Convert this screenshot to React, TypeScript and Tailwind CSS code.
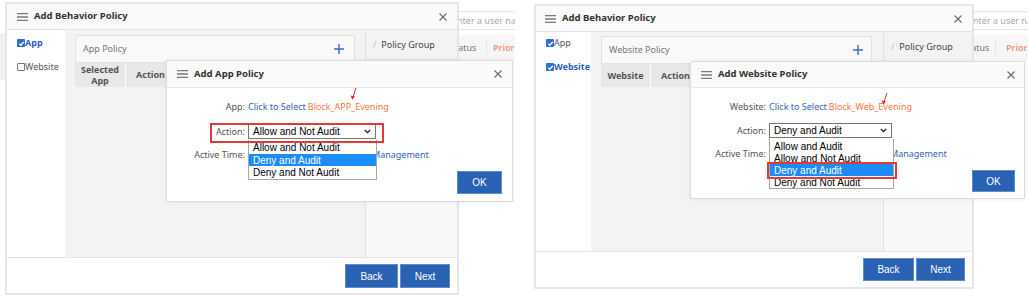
import React from "react";

const sans = "font-['Noto_Sans',sans-serif]";
const arial = "font-['Liberation_Sans',Arial,sans-serif]";

function MenuIcon() {
  return (
    <svg width="11" height="8" viewBox="0 0 11 8" className="shrink-0">
      <path d="M0 0.7h11M0 4h11M0 7.3h11" stroke="#7a7a7a" strokeWidth="1.3" />
    </svg>
  );
}

function CloseIcon() {
  return (
    <svg width="8" height="8" viewBox="0 0 8 8" className="shrink-0">
      <path d="M0.5 0.5l7 7M7.5 0.5l-7 7" stroke="#6a6a6a" strokeWidth="1.1" />
    </svg>
  );
}

function PlusIcon() {
  return (
    <svg width="10" height="10" viewBox="0 0 10 10" className="shrink-0">
      <path d="M5 0v10M0 5h10" stroke="#3a6cc0" strokeWidth="1.4" />
    </svg>
  );
}

function Chevron() {
  return (
    <svg width="7" height="5" viewBox="0 0 7 5" className="shrink-0">
      <path d="M0.8 1l2.7 2.7L6.2 1" stroke="#222" strokeWidth="1.3" fill="none" />
    </svg>
  );
}

function Check({ checked }: { checked: boolean }) {
  if (!checked) {
    return <span className="inline-block w-[8px] h-[8px] rounded-[1px] border border-[#777] bg-white shrink-0" />;
  }
  return (
    <span className="inline-flex w-[8px] h-[8px] rounded-[1px] bg-[#2f6fd6] items-center justify-center shrink-0">
      <svg width="7" height="7" viewBox="0 0 8 8">
        <path d="M1.5 4.2L3.3 6L6.6 2.2" stroke="white" strokeWidth="1.5" fill="none" />
      </svg>
    </span>
  );
}

function RedArrow({ className }: { className: string }) {
  return (
    <svg width="10" height="14" viewBox="0 0 10 14" className={className}>
      <path d="M7 1L3.6 11" stroke="#e8262b" strokeWidth="1" />
      <path d="M1.6 8.6L3.2 12.8L6 9.6Z" fill="#e8262b" />
    </svg>
  );
}

function BlueButton({ label, className }: { label: string; className: string }) {
  return (
    <button
      className={`${className} ${arial} bg-[#2a62b3] border border-[#5f8cd0] text-white text-[10px] flex items-center justify-center`}
    >
      {label}
    </button>
  );
}

function LeftShot() {
  return (
    <div className={`relative w-[515px] h-[299px] shrink-0 overflow-hidden bg-white ${sans}`}>
      {/* page behind the dialog */}
      <div className="absolute left-0 top-[33px] w-[6px] h-[47px] bg-[#f1f1f1]" />
      <div className="absolute left-[445px] top-[11px] w-[120px] h-[19px] border border-[#e2e2e2] pl-[6px] flex items-center text-[9px] text-[#a8a8a8]">
        Enter a user name
      </div>
      <div className="absolute left-[420px] top-[35px] w-[140px] h-[25px] bg-[#f6f6f6] flex items-center text-[9px]">
        <span className="w-[67px] pl-[30px] text-[#777] border-r border-[#e4e4e4]">Status</span>
        <span className="pl-[6px] text-[#f3907e] font-semibold">Priority</span>
      </div>

      {/* Add Behavior Policy */}
      <div className="relative ml-[5px] mt-[2px] w-[454px] h-[293px] border-2 border-[#e6e6e6] bg-white flex flex-col">
        <div className="h-[26px] shrink-0 border-b border-[#e4e4e4] bg-[#fafafa] flex items-center pl-[10px] pr-[10px] gap-[6px]">
          <MenuIcon />
          <span className="flex-1 font-bold text-[9.5px] text-[#333]">Add Behavior Policy</span>
          <CloseIcon />
        </div>
        <div className="h-[227px] shrink-0 flex">
          <div className="w-[58px] shrink-0 bg-white pl-[10px] pt-[6px] flex flex-col gap-[10px] text-[9px]">
            <div className="h-[14px] flex items-center">
              <Check checked />
              <span className="font-bold text-[#2b5fc0]">App</span>
            </div>
            <div className="h-[14px] flex items-center">
              <Check checked={false} />
              <span className="text-[#555]">Website</span>
            </div>
          </div>
          <div className="w-[300px] shrink-0 bg-[#f3f3f3] pl-[10px] pt-[5px]">
            <div className="w-[280px]">
              <div className="h-[28px] border border-[#e2e2e2] bg-[#f9f9f9] flex items-center justify-between pl-[7px] pr-[10px]">
                <span className="text-[9px] text-[#777]">App Policy</span>
                <PlusIcon />
              </div>
              <div className="h-[24px] bg-[#e8e8e8] flex text-[9px] font-bold text-[#555]">
                <div className="w-[50px] flex flex-col items-center justify-center leading-[11px]">
                  <span>Selected</span>
                  <span>App</span>
                </div>
                <div className="w-[50px] border-l border-white flex items-center justify-center">Action</div>
              </div>
            </div>
          </div>
          <div className="flex-1 border-l border-[#e0e0e0] bg-[#f8f8f8]">
            <div className="h-[30px] bg-[#f3f3f3] border-b border-[#e8e8e8] flex items-center pl-[7px] text-[9px]">
              <span className="text-[#bbb] mr-[5px]">/</span>
              <span className="text-[#444]">Policy Group</span>
            </div>
          </div>
        </div>
        <div className="h-[36px] shrink-0 border-t border-[#e4e4e4] flex justify-end items-start pt-[6px] pr-[7px] gap-[2px]">
          <BlueButton label="Back" className="w-[53px] h-[24px]" />
          <BlueButton label="Next" className="w-[50px] h-[24px]" />
        </div>
      </div>

      {/* Add App Policy */}
      <div className="absolute left-[166px] top-[60px] w-[347px] h-[142px] border border-[#dcdcdc] bg-white shadow-[0_0_4px_rgba(0,0,0,0.08)] z-20 text-[9px]">
        <div className="h-[27px] bg-[#fafafa] border-b border-[#e6e6e6] flex items-center pl-[10px] pr-[10px] gap-[6px]">
          <MenuIcon />
          <span className="flex-1 font-bold text-[9.5px] text-[#333]">Add App Policy</span>
          <CloseIcon />
        </div>
        <div className="pt-[12px]">
          <div className="h-[14px] flex items-center">
            <span className="w-[78px] text-right text-[#555]">App:</span>
            <span className="ml-[3px] text-[#3364b2]">Click to Select</span>
            <span className="ml-[2px] text-[#f5793b]">Block_APP_Evening</span>
          </div>
          <div className="mt-[10px] h-[15px] flex items-center">
            <span className="w-[78px] text-right text-[#555]">Action:</span>
            <div className={`ml-[3px] w-[128px] h-[15px] border border-[#767676] bg-white flex items-center pl-[4px] pr-[4px] text-[10px] text-black ${arial}`}>
              <span className="flex-1">Allow and Not Audit</span>
              <Chevron />
            </div>
          </div>
          <div className="mt-[9px] h-[14px] flex items-center">
            <span className="w-[78px] text-right text-[#555]">Active Time:</span>
            <span className="ml-[3px] pl-[124px] text-[#3364b2]">Management</span>
          </div>
          <div className="mt-[9px] flex justify-end pr-[10px]">
            <BlueButton label="OK" className="w-[45px] h-[23px]" />
          </div>
        </div>

        <div className={`absolute left-[81px] top-[79px] w-[129px] border border-t-0 border-[#a6a6a6] bg-white text-[10px] text-black ${arial}`}>
          <div className="h-[14px] flex items-center pl-[4px]">Allow and Not Audit</div>
          <div className="h-[12px] flex items-center pl-[4px] bg-[#1c8cf8] text-white">Deny and Audit</div>
          <div className="h-[13px] flex items-center pl-[4px]">Deny and Not Audit</div>
        </div>
        <div className="absolute left-[43px] top-[62px] w-[174px] h-[20px] border-2 border-[#e53935] pointer-events-none" />
        <RedArrow className="absolute left-[182px] top-[26px]" />
      </div>
    </div>
  );
}

function RightShot() {
  return (
    <div className={`relative w-[496px] h-[299px] shrink-0 overflow-hidden bg-white ${sans}`}>
      {/* page behind the dialog */}
      <div className="absolute left-[429px] top-[11px] w-[120px] h-[19px] border border-[#e2e2e2] pl-[6px] flex items-center text-[9px] text-[#a8a8a8]">
        Enter a user name
      </div>
      <div className="absolute left-[401px] top-[35px] w-[140px] h-[25px] bg-[#f6f6f6] flex items-center text-[9px]">
        <span className="w-[63px] pl-[30px] text-[#777] border-r border-[#e4e4e4]">Status</span>
        <span className="pl-[10px] text-[#f3907e] font-semibold">Priority</span>
      </div>

      {/* Add Behavior Policy */}
      <div className="relative ml-[2px] mt-[4px] w-[440px] h-[285px] border-2 border-[#e6e6e6] bg-white flex flex-col">
        <div className="h-[26px] shrink-0 border-b border-[#e4e4e4] bg-[#fafafa] flex items-center pl-[9px] pr-[10px] gap-[6px]">
          <MenuIcon />
          <span className="flex-1 font-bold text-[9.5px] text-[#333]">Add Behavior Policy</span>
          <CloseIcon />
        </div>
        <div className="h-[219px] shrink-0 flex">
          <div className="w-[55px] shrink-0 bg-white pl-[10px] pt-[4px] flex flex-col gap-[10px] text-[9px]">
            <div className="h-[14px] flex items-center">
              <Check checked />
              <span className="text-[#555]">App</span>
            </div>
            <div className="h-[14px] flex items-center">
              <Check checked />
              <span className="font-bold text-[#2b5fc0]">Website</span>
            </div>
          </div>
          <div className="w-[292px] shrink-0 bg-[#f3f3f3] pl-[10px] pt-[4px]">
            <div className="w-[271px]">
              <div className="h-[28px] border border-[#e2e2e2] bg-[#f9f9f9] flex items-center justify-between pl-[7px] pr-[8px]">
                <span className="text-[9px] text-[#777]">Website Policy</span>
                <PlusIcon />
              </div>
              <div className="h-[23px] bg-[#e8e8e8] flex text-[9px] font-bold text-[#555]">
                <div className="w-[49px] flex items-center justify-center">Website</div>
                <div className="w-[50px] border-l border-white flex items-center justify-center">Action</div>
              </div>
            </div>
          </div>
          <div className="flex-1 border-l border-[#e0e0e0] bg-[#f8f8f8]">
            <div className="h-[30px] bg-[#f3f3f3] border-b border-[#e8e8e8] flex items-center pl-[7px] text-[9px]">
              <span className="text-[#bbb] mr-[5px]">/</span>
              <span className="text-[#444]">Policy Group</span>
            </div>
          </div>
        </div>
        <div className="h-[36px] shrink-0 border-t border-[#e4e4e4] flex justify-end items-start pt-[6px] pr-[7px] gap-[2px]">
          <BlueButton label="Back" className="w-[51px] h-[23px]" />
          <BlueButton label="Next" className="w-[49px] h-[23px]" />
        </div>
      </div>

      {/* Add Website Policy */}
      <div className="absolute left-[158px] top-[61px] w-[335px] h-[138px] border border-[#dcdcdc] bg-white shadow-[0_0_4px_rgba(0,0,0,0.08)] z-20 text-[9px]">
        <div className="h-[26px] bg-[#fafafa] border-b border-[#e6e6e6] flex items-center pl-[10px] pr-[9px] gap-[6px]">
          <MenuIcon />
          <span className="flex-1 font-bold text-[9.5px] text-[#333]">Add Website Policy</span>
          <CloseIcon />
        </div>
        <div className="pt-[12px]">
          <div className="h-[14px] flex items-center">
            <span className="w-[75px] text-right text-[#555]">Website:</span>
            <span className="ml-[3px] text-[#3364b2]">Click to Select</span>
            <span className="ml-[2px] text-[#f5793b]">Block_Web_Evening</span>
          </div>
          <div className="mt-[9px] h-[15px] flex items-center">
            <span className="w-[75px] text-right text-[#555]">Action:</span>
            <div className={`ml-[3px] w-[123px] h-[15px] border border-[#767676] bg-white flex items-center pl-[4px] pr-[4px] text-[10px] text-black ${arial}`}>
              <span className="flex-1">Deny and Audit</span>
              <Chevron />
            </div>
          </div>
          <div className="mt-[9px] h-[14px] flex items-center">
            <span className="w-[75px] text-right text-[#555]">Active Time:</span>
            <span className="ml-[3px] pl-[121px] text-[#3364b2]">Management</span>
          </div>
          <div className="mt-[9px] flex justify-end pr-[9px]">
            <BlueButton label="OK" className="w-[43px] h-[22px]" />
          </div>
        </div>

        <div className={`absolute left-[78px] top-[77px] w-[125px] border border-t-0 border-[#a6a6a6] bg-white text-[10px] text-black ${arial}`}>
          <div className="h-[13px] flex items-center pl-[4px] pt-[2px]">Allow and Audit</div>
          <div className="h-[12px] flex items-center pl-[4px]">Allow and Not Audit</div>
          <div className="h-[12px] flex items-center pl-[4px] bg-[#1c8cf8] text-white">Deny and Audit</div>
          <div className="h-[12px] flex items-center pl-[4px]">Deny and Not Audit</div>
        </div>
        <div className="absolute left-[76px] top-[100px] w-[130px] h-[17px] border-2 border-[#e53935] pointer-events-none" />
        <RedArrow className="absolute left-[189px] top-[30px]" />
      </div>
    </div>
  );
}

export default function App() {
  return (
    <div className="w-[1028px] h-[299px] bg-white flex gap-[17px] overflow-hidden">
      <LeftShot />
      <RightShot />
    </div>
  );
}
